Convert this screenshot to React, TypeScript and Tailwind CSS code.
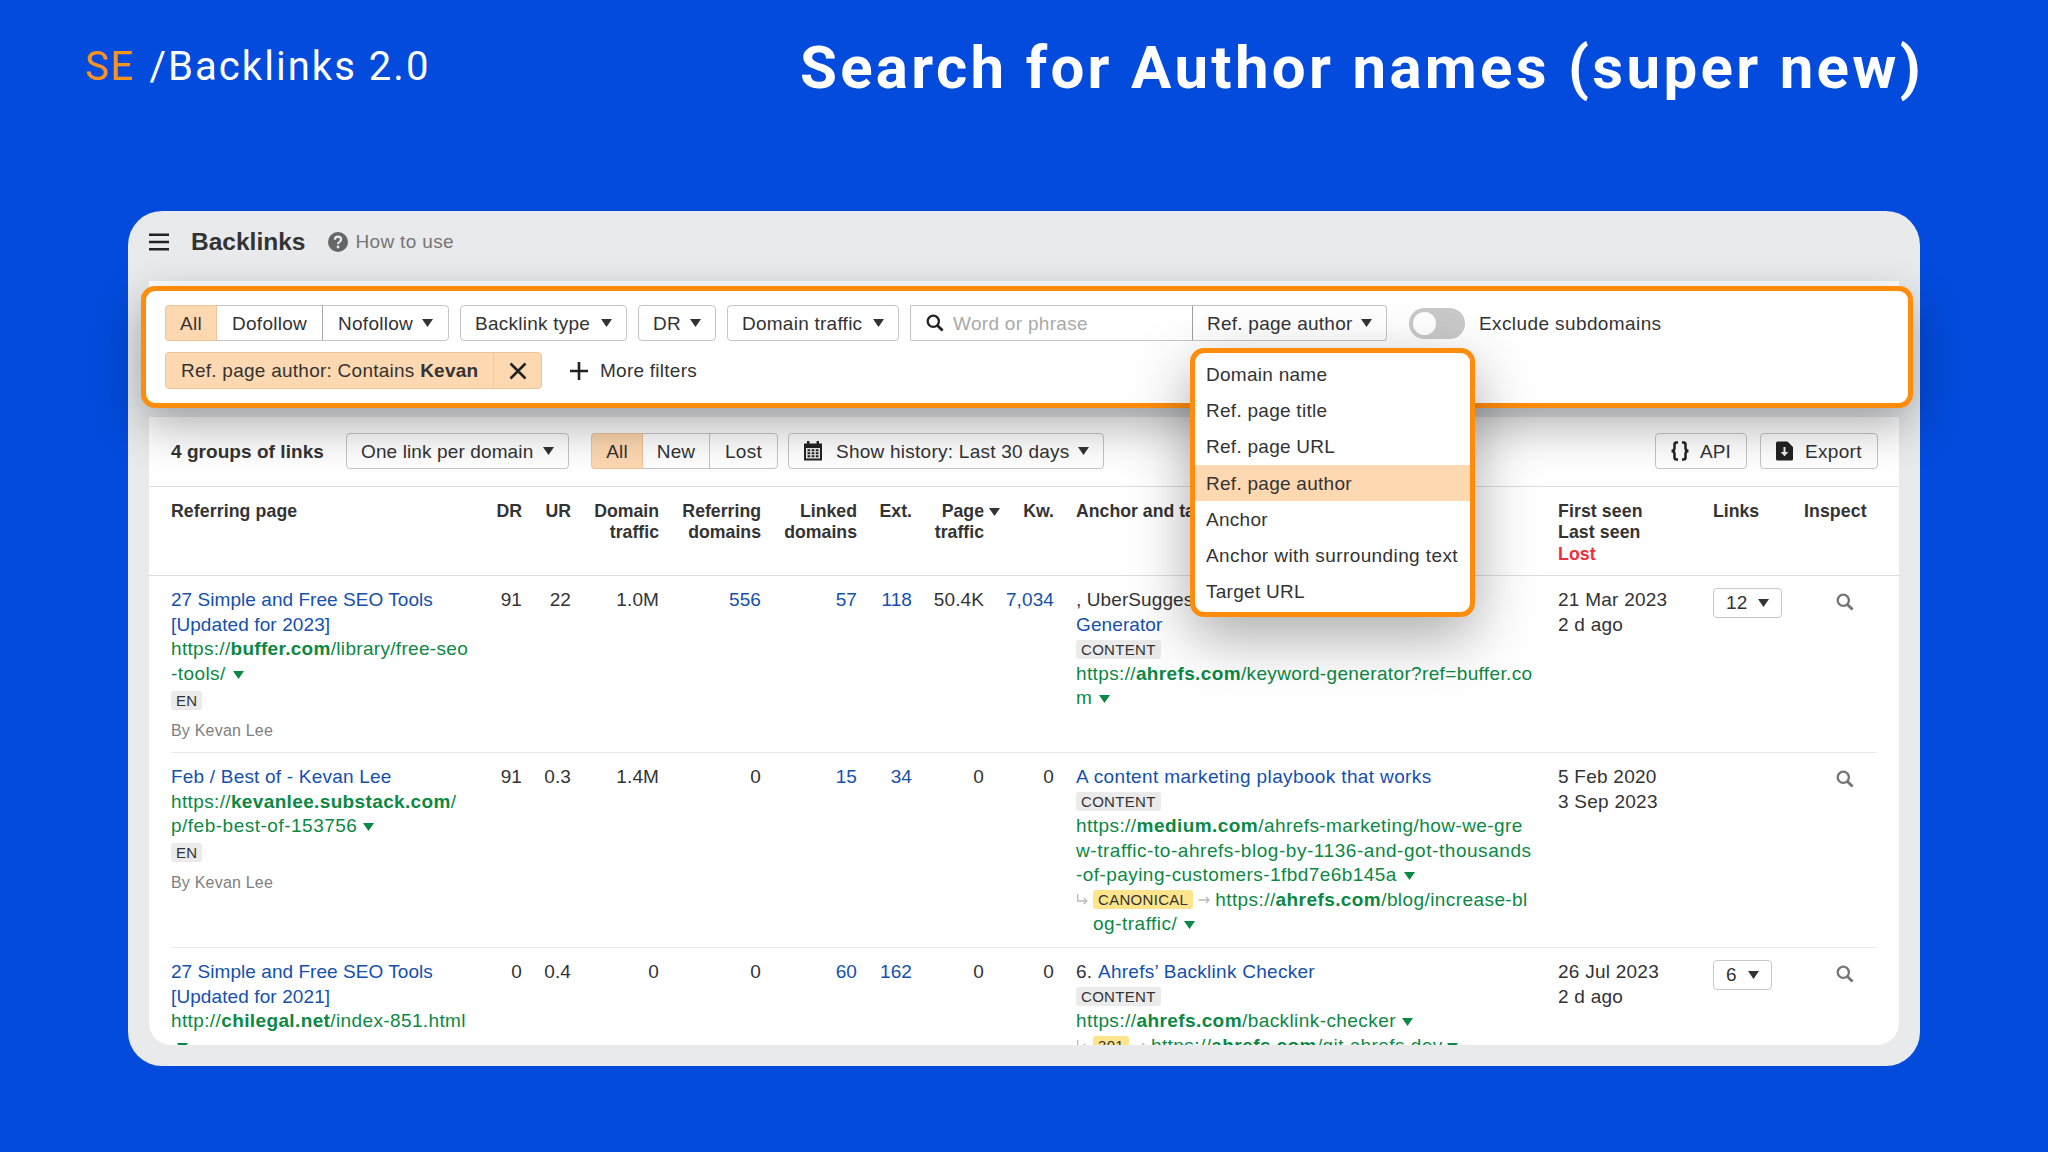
import type { ReactNode } from "react";

function Caret({ className = "" }: { className?: string }) {
  return (
    <svg viewBox="0 0 11 8" className={`inline-block h-2 w-[11px] shrink-0 ${className}`}>
      <path d="M0 0h11L5.5 8z" fill="currentColor" />
    </svg>
  );
}

function GreenCaret({ className = "top-px ml-[7px]" }: { className?: string }) {
  return <Caret className={`relative align-baseline ${className}`} />;
}

function Search({ className = "" }: { className?: string }) {
  return (
    <svg viewBox="0 0 18 18" className={`h-[18px] w-[18px] ${className}`} fill="none" stroke="currentColor">
      <circle cx="7.3" cy="7.3" r="5.6" strokeWidth="2.3" />
      <path d="M11.4 11.4l5.2 5.2" strokeWidth="2.8" />
    </svg>
  );
}

function Button({ children, className = "" }: { children: ReactNode; className?: string }) {
  return (
    <button
      className={`flex h-9 shrink-0 items-center whitespace-nowrap rounded-[4px] border border-[#c4c4c4] px-[14px] ${className}`}
    >
      {children}
    </button>
  );
}

function Tag({ children, className = "bg-[#ebebeb]" }: { children: ReactNode; className?: string }) {
  return (
    <span className={`inline-flex h-[19px] items-center rounded-[3px] px-[5px] text-[15px] leading-none tracking-[0.3px] text-[#333] ${className}`}>
      {children}
    </span>
  );
}

function Line({ children, className = "" }: { children: ReactNode; className?: string }) {
  return <div className={`flex h-[24.5px] items-center whitespace-pre ${className}`}>{children}</div>;
}

function Url({ children, className = "tracking-[0.42px]" }: { children: ReactNode; className?: string }) {
  return <Line className={`text-[#0b8843] ${className}`}>{children}</Line>;
}

function Hook() {
  return (
    <svg viewBox="0 0 12 12" className="mr-[5px] h-3 w-3 shrink-0 text-[#bbb]" fill="none" stroke="currentColor" strokeWidth="1.4">
      <path d="M1.7 0v7h9M7.8 4l3 3-3 3" />
    </svg>
  );
}

function Arrow() {
  return (
    <svg viewBox="0 0 12 12" className="mx-[5px] h-3 w-3 shrink-0 text-[#bbb]" fill="none" stroke="currentColor" strokeWidth="1.4">
      <path d="M.5 6h10.500M8 3l3 3-3 3" />
    </svg>
  );
}

const GRID =
  "grid grid-cols-[308px_43px_49px_88px_102px_96px_55px_72px_70px_22px_482px_155px_91px_73px] pl-[22px] pr-5";

function Num({ v, link = false }: { v: string; link?: boolean }) {
  return <div className={`text-right ${link ? "text-[#1450ac]" : ""}`}>{v}</div>;
}

type RowData = {
  nums: [string, boolean][];
  page: ReactNode;
  anchor: ReactNode;
  first: string;
  last: string;
  links?: string;
};

function Row({ row, className }: { row: RowData; className: string }) {
  return (
    <div className={`${GRID} pt-3 leading-[24.5px] ${className}`}>
      <div>{row.page}</div>
      {row.nums.map(([v, link], i) => (
        <Num key={i} v={v} link={link} />
      ))}
      <div />
      <div>{row.anchor}</div>
      <div className="tracking-[0.25px]">
        <div>{row.first}</div>
        <div>{row.last}</div>
      </div>
      <div>
        {row.links && (
          <button className="flex h-[30px] items-center gap-[11px] rounded-[4px] border border-[#c9c9c9] bg-white px-3">
            {row.links}
            <Caret />
          </button>
        )}
      </div>
      <div className="pl-8 pt-[5px] text-[#757575]">
        <Search />
      </div>
    </div>
  );
}

function Author() {
  return (
    <>
      <Line className="mt-[2px]">
        <Tag>EN</Tag>
      </Line>
      <Line className="mt-[6px] text-base tracking-[0.2px] text-[#808080]">By Kevan Lee</Line>
    </>
  );
}

const rows: RowData[] = [
  {
    nums: [["91", false], ["22", false], ["1.0M", false], ["556", true], ["57", true], ["118", true], ["50.4K", false], ["7,034", true]],
    page: (
      <>
        <Line className="tracking-[0.05px] text-[#1450ac]">27 Simple and Free SEO Tools</Line>
        <Line className="text-[#1450ac]">[Updated for 2023]</Line>
        <Url className="tracking-[0.31px]">https://<b>buffer.com</b>/library/free-seo</Url>
        <Url>-tools/<GreenCaret /></Url>
        <Author />
      </>
    ),
    anchor: (
      <>
        <Line>, UberSuggest, Keyword</Line>
        <Line className="text-[#1450ac]">Generator</Line>
        <Line><Tag>CONTENT</Tag></Line>
        <Url className="tracking-[0.36px]">https://<b>ahrefs.com</b>/keyword-generator?ref=buffer.co</Url>
        <Url>m<GreenCaret /></Url>
      </>
    ),
    first: "21 Mar 2023",
    last: "2 d ago",
    links: "12",
  },
  {
    nums: [["91", false], ["0.3", false], ["1.4M", false], ["0", false], ["15", true], ["34", true], ["0", false], ["0", false]],
    page: (
      <>
        <Line className="tracking-[0.2px] text-[#1450ac]">Feb / Best of - Kevan Lee</Line>
        <Url className="tracking-[0.36px]">https://<b>kevanlee.substack.com</b>/</Url>
        <Url className="tracking-[0.5px]">p/feb-best-of-153756<GreenCaret className="top-px ml-1.5" /></Url>
        <Author />
      </>
    ),
    anchor: (
      <>
        <Line className="tracking-[0.37px] text-[#1450ac]">A content marketing playbook that works</Line>
        <Line><Tag>CONTENT</Tag></Line>
        <Url className="tracking-[0.44px]">https://<b>medium.com</b>/ahrefs-marketing/how-we-gre</Url>
        <Url className="tracking-[0.55px]">w-traffic-to-ahrefs-blog-by-1136-and-got-thousands</Url>
        <Url className="tracking-[0.44px]">-of-paying-customers-1fbd7e6b145a<GreenCaret /></Url>
        <Url>
          <Hook />
          <Tag className="bg-[#fde48d]">CANONICAL</Tag>
          <Arrow />
          https://<b>ahrefs.com</b>/blog/increase-bl
        </Url>
        <Url className="pl-[17px] tracking-[0.5px]">og-traffic/<GreenCaret /></Url>
      </>
    ),
    first: "5 Feb 2020",
    last: "3 Sep 2023",
  },
  {
    nums: [["0", false], ["0.4", false], ["0", false], ["0", false], ["60", true], ["162", true], ["0", false], ["0", false]],
    page: (
      <>
        <Line className="tracking-[0.05px] text-[#1450ac]">27 Simple and Free SEO Tools</Line>
        <Line className="text-[#1450ac]">[Updated for 2021]</Line>
        <Url className="tracking-[0.38px]">http://<b>chilegal.net</b>/index-851.html</Url>
        <Url><GreenCaret className="top-px ml-1.5" /></Url>
      </>
    ),
    anchor: (
      <>
        <Line className="tracking-[0.27px]">6. <span className="text-[#1450ac]">Ahrefs’ Backlink Checker</span></Line>
        <Line><Tag>CONTENT</Tag></Line>
        <Url>https://<b>ahrefs.com</b>/backlink-checker<GreenCaret className="top-px ml-1.5" /></Url>
        <Url>
          <Hook />
          <Tag className="bg-[#fde48d]">301</Tag>
          <Arrow />
          https://<b>ahrefs.com</b>/git.ahrefs.dev<GreenCaret className="top-px ml-1" />
        </Url>
      </>
    ),
    first: "26 Jul 2023",
    last: "2 d ago",
    links: "6",
  },
];

const menu = ["Domain name", "Ref. page title", "Ref. page URL", "Ref. page author", "Anchor", "Anchor with surrounding text", "Target URL"];

function Menu() {
  return (
    <div className="absolute left-[-2px] top-[43px] z-20 h-[269px] w-[285px] overflow-visible rounded-[14px] border-[5px] border-[#ff8c0a] bg-white py-[3px] shadow-[0_20px_60px_rgba(0,0,0,0.34)]">
      {menu.map((m) => (
        <div
          key={m}
          className={`flex h-[36.300px] items-center whitespace-nowrap pl-[11px] ${m === "Ref. page author" ? "bg-[#fed8b1]" : ""} ${m === "Anchor with surrounding text" ? "tracking-[0.4px]" : "tracking-[0.270px]"}`}
        >
          {m}
        </div>
      ))}
    </div>
  );
}

function Filters() {
  return (
    <div className="relative z-10 mx-[21px] h-[126px] bg-white pt-[5px]">
      <div className="mx-[-8px] flex h-[122px] w-[1772px] flex-col gap-[11px] rounded-[14px] border-[5px] border-[#ff8c0a] bg-white pl-[19px] pt-[14px] tracking-[0.250px] shadow-[0_18px_48px_rgba(0,0,0,0.32)]">
        <div className="flex h-9 items-center">
          <div className="flex h-9 items-center rounded-[4px] border border-[#c4c4c4]">
            <div className="-ml-px flex h-9 w-[52px] items-center justify-center rounded-l-[4px] border border-[#eec598] bg-[#fed8b1]">All</div>
            <div className="flex h-full w-[106px] items-center justify-center border-r border-[#a8a8a8]">Dofollow</div>
            <div className="flex w-[125px] items-center justify-center gap-[9px]">Nofollow <Caret /></div>
          </div>
          <Button className="ml-[11px] w-[167px] justify-between">Backlink type <Caret /></Button>
          <Button className="ml-[11px] w-[78px] justify-between">DR <Caret /></Button>
          <Button className="ml-[11px] w-[172px] justify-between">Domain traffic <Caret /></Button>
          <div className="ml-[11px] flex h-9 w-[282px] items-center rounded-l-[2px] border border-[#c4c4c4] border-r-0 pl-[15px] tracking-[0.3px] text-[#a9a9a9]">
            <Search className="mr-[9px] text-[#222]" />
            Word or phrase
          </div>
          <div className="relative">
            <Button className="w-[195px] justify-between rounded-l-none border-l-[#a0a0a0]">Ref. page author <Caret /></Button>
            <Menu />
          </div>
          <div className="ml-[22px] flex h-[31px] w-14 items-center rounded-full bg-[#c9c9c9] px-1">
            <div className="h-[23px] w-[23px] rounded-full bg-white" />
          </div>
          <div className="ml-[14px] tracking-[0.4px]">Exclude subdomains</div>
        </div>
        <div className="flex h-[37px] items-center">
          <div className="flex h-[37px] w-[377px] items-center rounded-[4px] border border-[#ecc497] bg-[#fed8b1]">
            <div className="flex h-full w-[328px] items-center border-r border-[#f0c8a0] pl-[15px]">
              <span className="whitespace-pre">Ref. page author: Contains <b>Kevan</b></span>
            </div>
            <svg viewBox="0 0 18 18" className="ml-[15px] h-[18px] w-[18px]" stroke="#222" strokeWidth="2.6">
              <path d="M1.500 1.500l15 15M16.500 1.500l-15 15" />
            </svg>
          </div>
          <svg viewBox="0 0 18 18" className="ml-7 h-[18px] w-[18px]" stroke="#222" strokeWidth="2.6">
            <path d="M9 0v18M0 9h18" />
          </svg>
          <div className="ml-3">More filters</div>
        </div>
      </div>
    </div>
  );
}

function Toolbar() {
  return (
    <div className="flex h-[69.500px] items-center border-b border-[#dedede] pl-[22px] pr-[21px]">
      <b className="w-[175px] tracking-[0.05px]">4 groups of links</b>
      <Button className="w-[223px] justify-between tracking-[0.120px]">One link per domain <Caret /></Button>
      <div className="ml-[22px] flex h-9 rounded-[4px] border border-[#c4c4c4]">
        <div className="-m-px flex w-[52px] items-center justify-center rounded-l-[4px] border border-[#eec598] bg-[#fed8b1]">All</div>
        <div className="ml-px flex w-[67px] items-center justify-center border-r border-[#c4c4c4]">New</div>
        <div className="flex w-[67px] items-center justify-center tracking-[0.250px]">Lost</div>
      </div>
      <Button className="ml-[10px] w-[316px] !px-[14px] tracking-[0.250px]">
        <svg viewBox="0 0 20 20" className="mr-[13px] h-5 w-5 shrink-0">
          <path d="M1 2.500h3V0h2.400v2.500h7.200V0H16v2.500h3V19.500H1z" fill="#222" />
          <path d="M3 7h14v10.500H3z" fill="#eee" />
          <path d="M4.500 8.300h2.700v2H4.500zM8.650 8.300h2.700v2h-2.700zM12.800 8.300h2.700v2h-2.700zM4.500 11.300h2.700v2H4.500zM8.650 11.300h2.700v2h-2.700zM12.800 11.300h2.700v2h-2.700zM4.500 14.300h2.700v2H4.500zM8.650 14.300h2.700v2h-2.700zM12.800 14.300h2.700v2h-2.700z" fill="#222" />
        </svg>
        Show history: Last 30 days <Caret className="ml-2" />
      </Button>
      <Button className="ml-auto w-[92px]">
        <svg viewBox="0 0 20 20" className="mr-[10px] h-5 w-5 shrink-0" fill="none" stroke="#222" strokeWidth="2.500">
          <path d="M8 1.500H6.500Q4.500 1.500 4.500 3.500V7Q4.500 10 1.500 10Q4.500 10 4.500 13V16.500Q4.500 18.500 6.500 18.500H8M12 1.500h1.500q2 0 2 2V7q0 3 3 3q-3 0-3 3v3.500q0 2-2 2H12" />
        </svg>
        API
      </Button>
      <Button className="ml-[13px] w-[118px] !pl-[15px]">
        <svg viewBox="0 0 18 20" className="mr-[11px] h-5 w-[18px] shrink-0">
          <path d="M1.500.500h10L17 6v12a1.500 1.500 0 0 1-1.500 1.500h-14A1.500 1.500 0 0 1 0 18V2A1.500 1.500 0 0 1 1.500.500z" fill="#222" />
          <path d="M7.500 6h2v5h2.800l-3.800 4.200L4.700 11h2.800z" fill="#eee" />
        </svg>
        <span className="tracking-[0.3px]">Export</span>
      </Button>
    </div>
  );
}

function TableHead() {
  return (
    <div className={`${GRID} h-[89.500px] border-b border-[#dedede] pt-[14px] text-[17.700px] font-bold leading-[21.800px] tracking-normal`}>
      <div className="tracking-[0.1px]">Referring page</div>
      <div className="text-right">DR</div>
      <div className="text-right">UR</div>
      <div className="text-right">Domain<br />traffic</div>
      <div className="text-right">Referring<br />domains</div>
      <div className="text-right">Linked<br />domains</div>
      <div className="text-right">Ext.</div>
      <div className="relative text-right">
        Page<br />traffic
        <Caret className="absolute -right-4 top-[7px]" />
      </div>
      <div className="text-right">Kw.</div>
      <div />
      <div>Anchor and target URL</div>
      <div className="tracking-[0.1px]">First seen<br />Last seen<br /><span className="text-[#ee2f3c]">Lost</span></div>
      <div>Links</div>
      <div className="tracking-[0.1px]">Inspect</div>
    </div>
  );
}

export default function App() {
  return (
    <div className="flex h-[1152px] w-[2048px] flex-col overflow-hidden bg-[#034bdc] font-['Liberation_Sans',Arial,sans-serif] text-[19px] leading-none text-[#333]">
      <header className="flex h-[211px] justify-between pl-[85px] pr-[124px] font-['Roboto',sans-serif] text-white">
        <div className="flex gap-[15px] whitespace-pre pt-[47px] text-[40px] leading-[40px]">
          <span className="tracking-[1.5px] text-[#f7931e]">SE</span>
          <span className="tracking-[2.05px]">/Backlinks 2.0</span>
        </div>
        <h1 className="whitespace-nowrap pt-[38px] text-[60px] font-bold leading-[60px] tracking-[3.300px]">
          Search for Author names (super new)
        </h1>
      </header>
      <main className="mx-32 flex h-[855px] w-[1792px] flex-col rounded-[34px] bg-[#e8eaec]">
        <div className="flex h-[70px] shrink-0 items-center pb-[9px] pl-[21px]">
          <svg viewBox="0 0 20 18" className="h-[18px] w-5" stroke="#222" strokeWidth="2.600">
            <path d="M0 1.800h20M0 9h20M0 16.200h20" />
          </svg>
          <h2 className="ml-[22px] mt-px text-[24.500px] font-bold">Backlinks</h2>
          <svg viewBox="0 0 20 20" className="ml-[23px] h-5 w-5">
            <circle cx="10" cy="10" r="10" fill="#666" />
            <path d="M6.900 7.800Q6.900 4.700 10 4.700T13.100 7.600Q13.100 9 11.500 9.900Q10 10.700 10 12.200" fill="none" stroke="#e8eaec" strokeWidth="2.200" />
            <circle cx="10" cy="15" r="1.400" fill="#e8eaec" />
          </svg>
          <span className="ml-[7px] tracking-[0.350px] text-[#757575]">How to use</span>
        </div>
        <Filters />
        <section className="mx-[21px] mt-[10px] h-[628px] w-[1750px] overflow-hidden rounded-b-[22px] bg-white tracking-[0.100px]">
          <Toolbar />
          <TableHead />
          <Row row={rows[0]} className="h-[176px]" />
          <div className="mx-[22px] h-px bg-[#e8e8e8]" />
          <Row row={rows[1]} className="h-[194px]" />
          <div className="mx-[22px] h-px bg-[#e8e8e8]" />
          <Row row={rows[2]} className="h-[176px]" />
        </section>
      </main>
    </div>
  );
}
